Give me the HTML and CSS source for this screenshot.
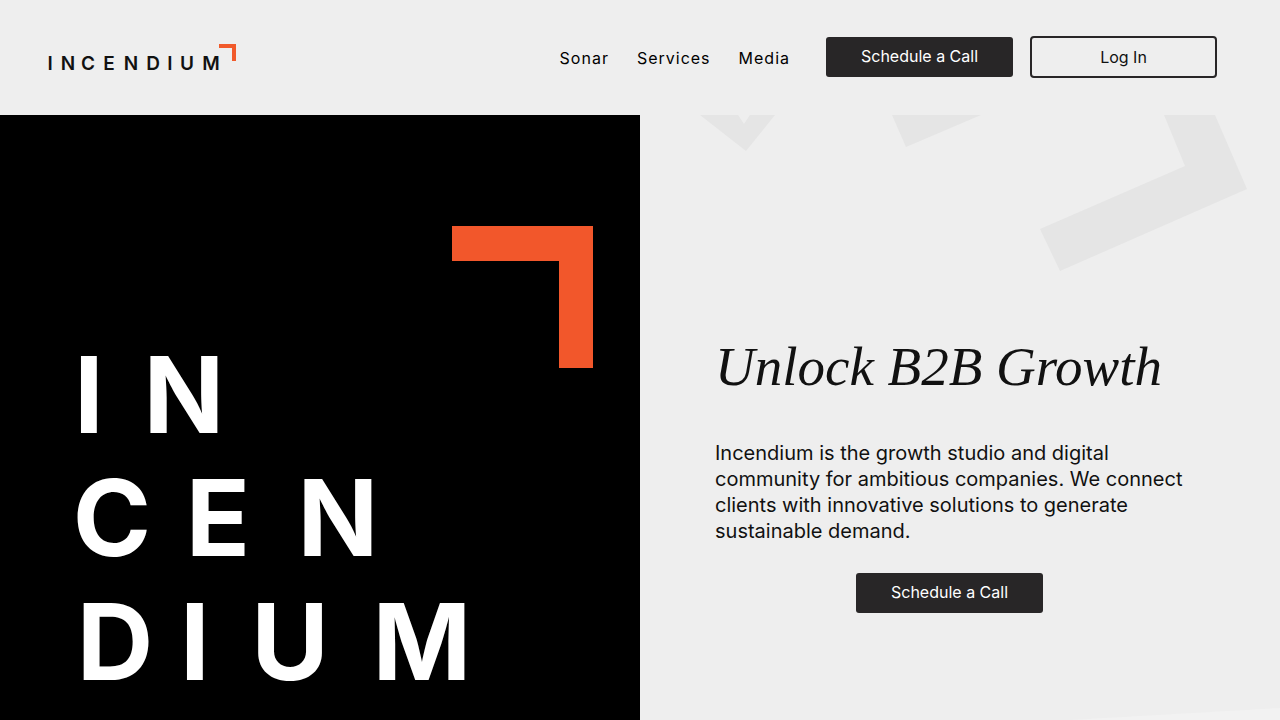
FILE: index.html
```html
<!DOCTYPE html>
<html lang="en">
<head>
<meta charset="utf-8">
<meta name="viewport" content="width=device-width, initial-scale=1">
<title>Incendium</title>
<link rel="stylesheet" href="styles.css">
</head>
<body>
<header class="header">
  <a class="brand" href="#" aria-label="Incendium home">
    <svg class="brand-mark" viewBox="0 0 188 28" width="188" height="28">
      <text class="brand-text" y="27" x="2 20 40 61 83 105 122 139 163">INCENDIUM</text>
      <path d="M171 1h17v17h-4V5h-13z" fill="#f15a2b"/>
    </svg>
  </a>
  <nav class="nav">
    <a class="nav-link" href="#">Sonar</a>
    <a class="nav-link" href="#">Services</a>
    <a class="nav-link" href="#">Media</a>
  </nav>
  <div class="actions">
    <button class="button" type="button">Schedule a Call</button>
    <button class="button button-outline" type="button">Log In</button>
  </div>
</header>
<main class="hero">
  <section class="poster">
    <svg class="poster-art" viewBox="0 0 640 605">
      <path d="M452 111h141v142h-34V146H452z" fill="#f2572b"/>
      <text class="poster-text" y="318" x="89 184">IN</text>
      <text class="poster-text" y="441" x="112 218 338">CEN</text>
      <text class="poster-text" y="565" x="115 195 290 422">DIUM</text>
    </svg>
  </section>
  <section class="intro">
    <svg class="backdrop" viewBox="0 0 640 605" preserveAspectRatio="xMidYMin slice" aria-hidden="true">
      <path d="M60 0h38l6 9 6-9h25l-29 36z M252 0h89l-75 32z M524 0h51l32 74-187 82-20-42 145-63z" fill="#e5e5e5"/>
      <path d="M430 605l210-12v12z" fill="#f2f2f2"/>
    </svg>
    <div class="copy">
      <h1 class="title">Unlock B2B Growth</h1>
      <p class="lead">Incendium is the growth studio and digital community for ambitious companies. We connect clients with innovative solutions to generate sustainable demand.</p>
      <button class="button" type="button">Schedule a Call</button>
    </div>
  </section>
</main>
</body>
</html>
```
FILE: styles.css
```css
* { box-sizing: border-box; }
body {
  margin: 0;
  min-height: 100vh;
  display: flex;
  flex-direction: column;
  background: #eee;
  color: #111;
  font-family: Inter, "Liberation Sans", sans-serif;
}
.header {
  display: flex;
  align-items: center;
  padding: 36px 63px 37px 48px;
}
.brand { margin-right: auto; }
.brand-mark { display: block; overflow: visible; }
.brand-text {
  font: 600 19px Inter, "Liberation Sans", sans-serif;
  text-anchor: middle;
  fill: #111;
}
.nav { display: flex; gap: 28px; margin-right: 36px; padding-top: 2px; }
.nav-link {
  color: #000;
  font-size: 16px;
  line-height: 24px;
  letter-spacing: 1px;
  text-decoration: none;
}
.actions { display: flex; align-items: center; gap: 17px; }
.button {
  width: 187px;
  height: 40px;
  padding: 0 0 2px;
  border: 0;
  border-radius: 3px;
  background: #282627;
  color: #fff;
  font: 16px Inter, "Liberation Sans", sans-serif;
}
.button-outline {
  height: 42px;
  padding: 0;
  border: 2px solid #282627;
  border-radius: 4px;
  background: transparent;
  color: #111;
}
.hero { flex: 1; display: grid; grid-template-columns: 1fr 1fr; }
.poster { background: #000; }
.poster-art { display: block; width: 100%; }
.poster-text {
  font: 700 106px Inter, "Liberation Sans", sans-serif;
  text-anchor: middle;
  fill: #fff;
}
.intro {
  position: relative;
  display: flex;
  padding: 217px 96px 0 75px;
}
.backdrop { position: absolute; inset: 0; width: 100%; height: 100%; }
.copy {
  position: relative;
  flex: 1;
  display: flex;
  flex-direction: column;
}
.title {
  margin: 0 0 38px;
  font: italic 400 55px/70px "Liberation Serif", serif;
}
.lead {
  margin: 0 0 29px;
  font-size: 20px;
  line-height: 26px;
}
.copy .button { align-self: center; }
@media (max-width: 900px) {
  .header { flex-wrap: wrap; gap: 20px; }
  .hero { grid-template-columns: 1fr; }
}
```
